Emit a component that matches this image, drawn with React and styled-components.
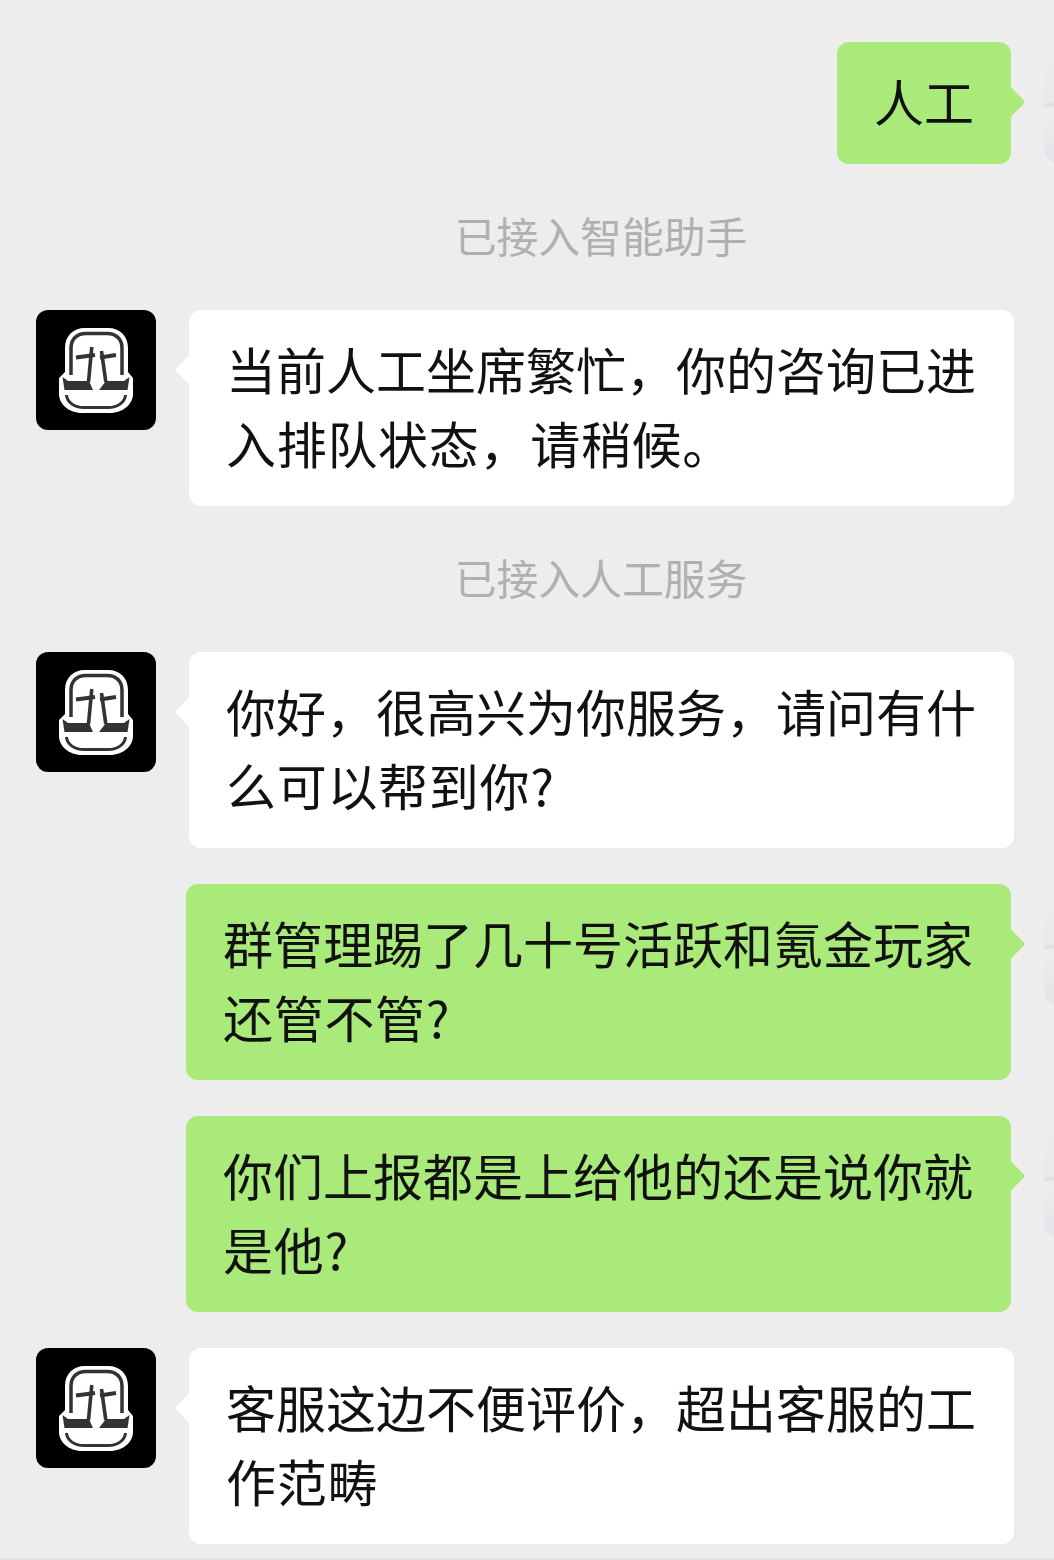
import React from "react";
import styled, { createGlobalStyle } from "styled-components";

const Global = createGlobalStyle`
  html, body { margin: 0; padding: 0; background: #ededed; }
  body { font-family: "Noto Sans CJK SC", "Noto Sans", sans-serif; }
`;

const Page = styled.main`
  width: 1054px;
  height: 1560px;
  box-sizing: border-box;
  padding-top: 42px;
  background: #ededed;
  display: flex;
  flex-direction: column;
  gap: 36px;
  overflow: hidden;
  border-bottom: 2px solid #e0e0e0;
`;

const Row = styled.div`
  display: flex;
  align-items: flex-start;
  gap: 33px;
  padding-left: ${(p) => (p.$mine ? "0" : "36px")};
  justify-content: ${(p) => (p.$mine ? "flex-end" : "flex-start")};
  margin-right: ${(p) => (p.$mine ? "-110px" : "0")};
`;

const Avatar = styled.div`
  width: 120px;
  height: 120px;
  flex: none;
  border-radius: 12px;
  background: #000;
  display: flex;
  align-items: center;
  justify-content: center;
`;

const HiddenAvatar = styled.div`
  width: 120px;
  height: 120px;
  flex: none;
  border-radius: 12px;
  background: linear-gradient(180deg, #ececee 0%, #eaeaec 50%, #dedee2 52%, #eeeef0 56%, #e4e4e8 100%);
`;

const Bubble = styled.div`
  position: relative;
  flex: none;
  box-sizing: border-box;
  width: ${(p) => p.$width || "825px"};
  padding: 21px 36px 27px 37px;
  border-radius: 12px;
  background: ${(p) => (p.$mine ? "#a9ea7a" : "#ffffff")};
  color: #111;
  font-size: 50px;
  line-height: 74px;
  font-weight: 400;
  text-spacing-trim: space-all;
  white-space: nowrap;

  &::before {
    content: "";
    position: absolute;
    top: 49px;
    width: 22px;
    height: 22px;
    border-radius: 3px;
    background: inherit;
    transform: rotate(45deg);
    ${(p) => (p.$mine ? "right: -10px;" : "left: -10px;")}
  }
`;

const LastLine = styled.div`
  letter-spacing: 0.7px;
`;

const System = styled.div`
  padding: 0 0 4px 148px;
  text-align: center;
  font-size: 41.8px;
  line-height: 70px;
  color: #b0b0b0;
`;

function BotIcon() {
  return (
    <svg width="120" height="120" viewBox="0 0 120 120" fill="none">
      <path
        d="M29 62V38C29 26 37 18 49 18H72C84 18 92 26 92 38V62L97 68V84C97 94 87 103 74 103H46C33 103 23 94 23 84V68Z"
        fill="#fff"
      />
      <path
        d="M35 65V38C35 29 41 23.5 50 23.5H71C80 23.5 86 29 86 38V65"
        stroke="#333"
        strokeWidth="3.5"
      />
      <path d="M26.5 67L32 71H53L57 80H28.5Z" fill="#333" />
      <path d="M93.5 67L88 71H70L63 80H91.5Z" fill="#333" />
      <path d="M55.8 37L52.5 72M65.5 41L69.8 72" stroke="#333" strokeWidth="3.6" />
      <path d="M40 47.5L59 45M64 47.5L80 45" stroke="#333" strokeWidth="4" />
      <path d="M30.5 85C31 92 38 97.5 48 97.5H72C82 97.5 89 92 89.5 85" stroke="#333" strokeWidth="3" />
    </svg>
  );
}

const Message = ({ mine, width, first, last }) =>
  mine ? (
    <Row $mine>
      <Bubble $mine $width={width}>
        <div>{first}</div>
        {last && <LastLine>{last}</LastLine>}
      </Bubble>
      <HiddenAvatar />
    </Row>
  ) : (
    <Row>
      <Avatar><BotIcon /></Avatar>
      <Bubble>
        <div>{first}</div>
        {last && <LastLine>{last}</LastLine>}
      </Bubble>
    </Row>
  );

export default function App() {
  return (
    <Page lang="zh-CN">
      <Global />
      <Message mine width="174px" first="人工" />
      <System>已接入智能助手</System>
      <Message first="当前人工坐席繁忙，你的咨询已进" last="入排队状态，请稍候。" />
      <System>已接入人工服务</System>
      <Message first="你好，很高兴为你服务，请问有什" last="么可以帮到你?" />
      <Message mine first="群管理踢了几十号活跃和氪金玩家" last="还管不管?" />
      <Message mine first="你们上报都是上给他的还是说你就" last="是他?" />
      <Message first="客服这边不便评价，超出客服的工" last="作范畴" />
    </Page>
  );
}
